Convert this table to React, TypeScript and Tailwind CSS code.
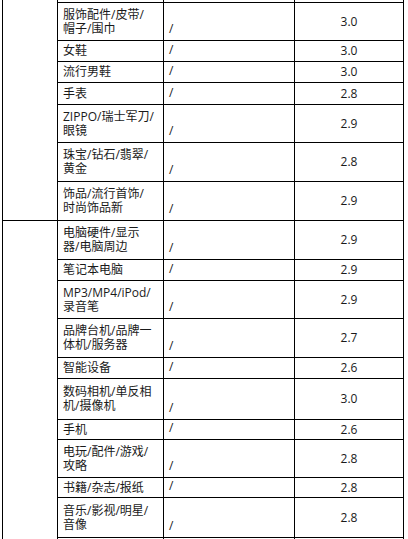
const rows = [
  { lines: ['服饰配件/皮带/', '帽子/围巾'], value: '3.0', h: 'h-[37px]' },
  { lines: ['女鞋'], value: '3.0', h: 'h-[20px]' },
  { lines: ['流行男鞋'], value: '3.0', h: 'h-[20px]' },
  { lines: ['手表'], value: '2.8', h: 'h-[21px]' },
  { lines: ['ZIPPO/瑞士军刀/', '眼镜'], value: '2.9', h: 'h-[37px]' },
  { lines: ['珠宝/钻石/翡翠/', '黄金'], value: '2.8', h: 'h-[38px]' },
  { lines: ['饰品/流行首饰/', '时尚饰品新'], value: '2.9', h: 'h-[38px]' },
];

const rows2 = [
  { lines: ['电脑硬件/显示', '器/电脑周边'], value: '2.9', h: 'h-[38px]' },
  { lines: ['笔记本电脑'], value: '2.9', h: 'h-[20px]' },
  { lines: ['MP3/MP4/iPod/', '录音笔'], value: '2.9', h: 'h-[37px]' },
  { lines: ['品牌台机/品牌一', '体机/服务器'], value: '2.7', h: 'h-[38px]' },
  { lines: ['智能设备'], value: '2.6', h: 'h-[20px]' },
  { lines: ['数码相机/单反相', '机/摄像机'], value: '3.0', h: 'h-[40px]' },
  { lines: ['手机'], value: '2.6', h: 'h-[19px]' },
  { lines: ['电玩/配件/游戏/', '攻略'], value: '2.8', h: 'h-[37px]' },
  { lines: ['书籍/杂志/报纸'], value: '2.8', h: 'h-[19px]' },
  { lines: ['音乐/影视/明星/', '音像'], value: '2.8', h: 'h-[39px]' },
];

type Row = { lines: string[]; value: string; h: string };

function Cells({ row }: { row: Row }) {
  return (
    <>
      <div className={`${row.h} bg-white flex flex-col justify-center px-[5px]`}>
        {row.lines.map((l) => (
          <span key={l} className="whitespace-nowrap">
            {l}
          </span>
        ))}
      </div>
      <div className="bg-white flex items-end px-[5px] pb-[4px]">/</div>
      <div className="bg-white flex items-center justify-center">{row.value}</div>
    </>
  );
}

export default function App() {
  return (
    <div className="w-[408px] h-[539px] overflow-hidden bg-white">
      <div className="ml-[2px] w-[402px] grid grid-cols-[54px_105px_130px_108px] gap-px bg-black px-px pb-px text-[12px] leading-[14px] text-[#1a1a1a] font-['Open_Sans','Noto_Sans_CJK_SC',sans-serif]">
        <div className="row-span-8 bg-white" />
        <div className="h-[2px] bg-white" />
        <div className="bg-white" />
        <div className="bg-white" />
        {rows.map((r) => (
          <Cells key={r.lines[0]} row={r} />
        ))}
        <div className="row-span-11 bg-white" />
        {rows2.map((r) => (
          <Cells key={r.lines[0]} row={r} />
        ))}
        <div className="h-[20px] bg-white" />
        <div className="bg-white" />
        <div className="bg-white" />
      </div>
    </div>
  );
}
